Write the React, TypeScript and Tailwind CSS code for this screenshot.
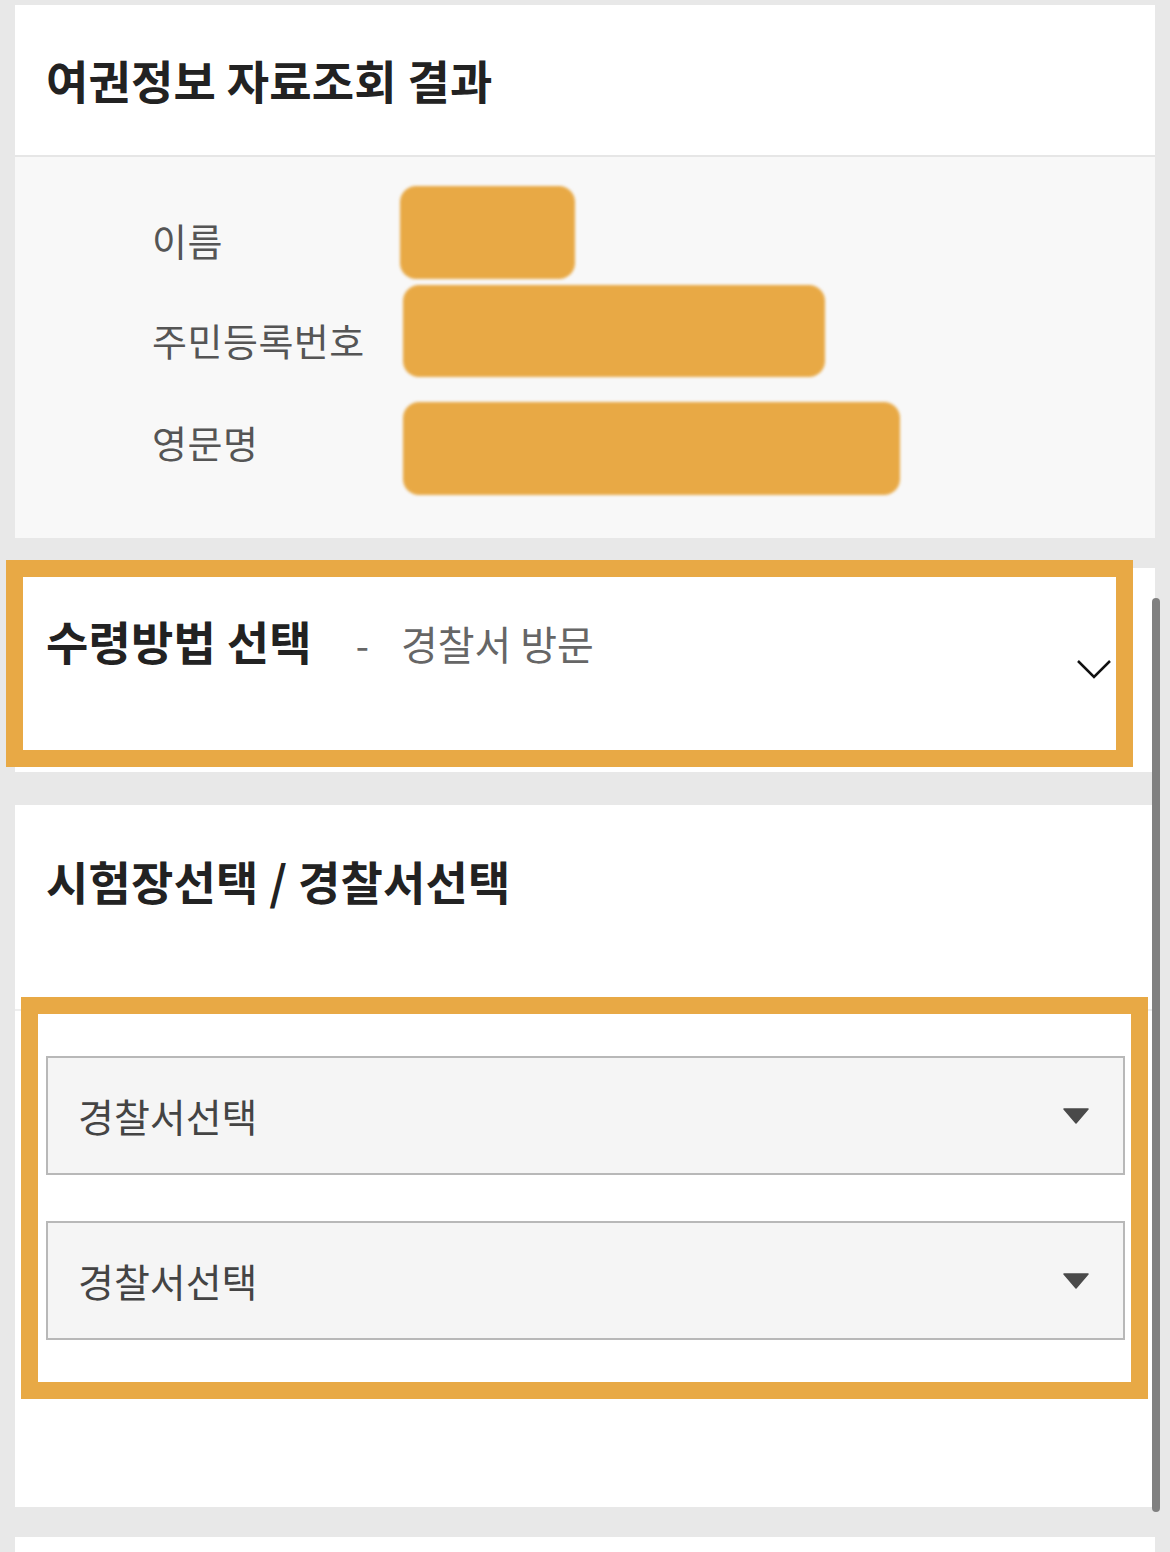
import React from "react";

const FONT = { fontFamily: '"Noto Sans CJK KR", "Noto Sans", sans-serif' };

function Blob({ w, h, ml }: { w: number; h: number; ml: number }) {
  return (
    <div
      className="rounded-[16px] bg-[#e8a945] blur-[1.5px]"
      style={{ width: w, height: h, marginLeft: ml }}
    />
  );
}

function SelectBox() {
  return (
    <div className="h-[119px] ml-[31px] w-[1079px] bg-[#f5f5f5] border-2 border-[#b8b8b8] flex items-center justify-between pl-[30px] pr-[34px]">
      <span className="text-[39px] text-[#444]">경찰서선택</span>
      <svg width="26" height="16" viewBox="0 0 26 16">
        <path d="M1 1 H25 L13 15 Z" fill="#4a4a4a" stroke="#4a4a4a" strokeWidth="1.5" strokeLinejoin="round" />
      </svg>
    </div>
  );
}

export default function App() {
  return (
    <div className="relative bg-[#e8e8e8] min-h-[1552px] h-[1552px] overflow-hidden pt-[5px]" style={FONT}>
      {/* Card 1 */}
      <div className="ml-[15px] w-[1140px] bg-white">
        <div className="h-[150px] flex items-center pl-[31px] pb-[2px]">
          <h1 className="text-[46px] font-bold text-[#222] tracking-[0.2px]">여권정보 자료조회 결과</h1>
        </div>
        <div className="h-[2px] bg-[#e6e6e6]" />
        <div className="h-[381px] bg-[#f8f8f8] flex pt-[28px]">
          <div className="w-[385px] pl-[137px] flex flex-col text-[38px] text-[#555] tracking-[0.5px]">
            <div className="h-[100px] flex items-center pt-[8px]">이름</div>
            <div className="h-[103px] flex items-center pt-[6px]">주민등록번호</div>
            <div className="h-[103px] flex items-center pt-[4px]">영문명</div>
          </div>
          <div className="flex flex-col">
            <div className="h-[100px] flex items-start pt-[1px]"><Blob w={175} h={93} ml={0} /></div>
            <div className="h-[100px] flex items-start"><Blob w={422} h={92} ml={3} /></div>
            <div className="h-[110px] flex items-end"><Blob w={497} h={93} ml={3} /></div>
          </div>
        </div>
      </div>

      {/* Card 2 */}
      <div className="relative mt-[30px] ml-[15px] w-[1140px] h-[204px] bg-white">
        <div className="flex items-baseline pl-[31px] pt-[38px]">
          <span className="text-[46px] font-bold text-[#222] tracking-[0.2px]">수령방법 선택</span>
          <span className="ml-[44px] text-[38px] text-[#666]">-</span>
          <span className="ml-[32px] text-[40px] text-[#666]">경찰서 방문</span>
        </div>
        <svg className="absolute left-[1061px] top-[90px]" width="36" height="22" viewBox="0 0 36 22">
          <polyline points="2,3 18,19 34,3" fill="none" stroke="#111" strokeWidth="2.5" />
        </svg>
        <div className="absolute left-[-9px] top-[-8px] w-[1127px] h-[207px] border-[17px] border-[#e8a945]" />
      </div>

      {/* Card 3 */}
      <div className="relative mt-[33px] ml-[15px] w-[1140px] h-[702px] bg-white">
        <div className="h-[150px] flex items-center pl-[31px]">
          <h2 className="text-[46px] font-bold text-[#222] tracking-[0.2px]">시험장선택 / 경찰서선택</h2>
        </div>
        <div className="mt-[54px] h-[2px] bg-[#eeeeee]" />
        <div className="pt-[45px] flex flex-col gap-[46px]">
          <SelectBox />
          <SelectBox />
        </div>
        <div className="absolute left-[6px] top-[192px] w-[1127px] h-[402px] border-[17px] border-[#e8a945]" />
      </div>

      {/* Card 4 */}
      <div className="mt-[30px] ml-[15px] w-[1140px] h-[40px] bg-white" />

      {/* Scrollbar */}
      <div className="absolute left-[1152px] top-[598px] w-[8px] h-[914px] rounded-full bg-[#808080]" />
    </div>
  );
}
